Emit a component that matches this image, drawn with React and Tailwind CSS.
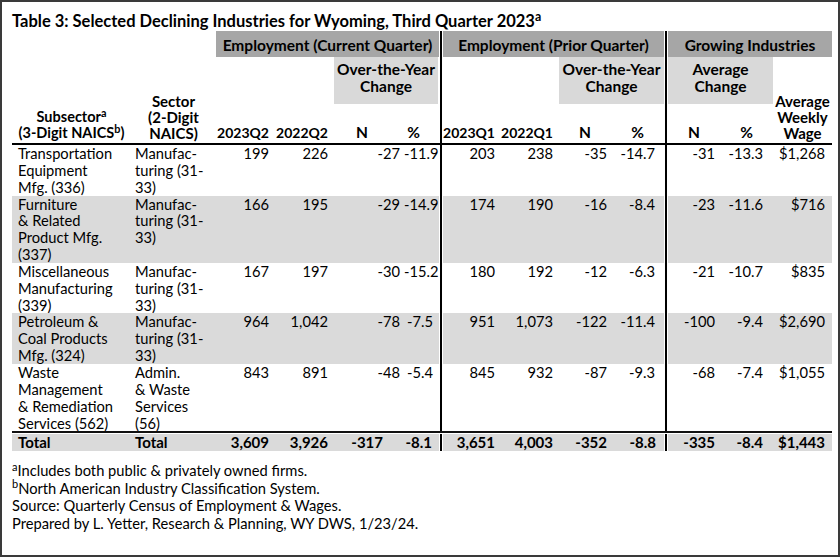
const rows = [
  {
    sub: ['Transportation', 'Equipment', 'Mfg. (336)'],
    sec: ['Manufac-', 'turing (31-', '33)'],
    v: ['199', '226', '-27', '-11.9', '203', '238', '-35', '-14.7', '-31', '-13.3', '$1,268'],
    gray: false,
  },
  {
    sub: ['Furniture', '& Related', 'Product Mfg.', '(337)'],
    sec: ['Manufac-', 'turing (31-', '33)'],
    v: ['166', '195', '-29', '-14.9', '174', '190', '-16', '-8.4', '-23', '-11.6', '$716'],
    gray: true,
  },
  {
    sub: ['Miscellaneous', 'Manufacturing', '(339)'],
    sec: ['Manufac-', 'turing (31-', '33)'],
    v: ['167', '197', '-30', '-15.2', '180', '192', '-12', '-6.3', '-21', '-10.7', '$835'],
    gray: false,
  },
  {
    sub: ['Petroleum &', 'Coal Products', 'Mfg. (324)'],
    sec: ['Manufac-', 'turing (31-', '33)'],
    v: ['964', '1,042', '-78', '-7.5', '951', '1,073', '-122', '-11.4', '-100', '-9.4', '$2,690'],
    gray: true,
  },
  {
    sub: ['Waste', 'Management', '& Remediation', 'Services (562)'],
    sec: ['Admin.', '& Waste', 'Services', '(56)'],
    v: ['843', '891', '-48', '-5.4', '845', '932', '-87', '-9.3', '-68', '-7.4', '$1,055'],
    gray: false,
  },
];

const total = ['3,609', '3,926', '-317', '-8.1', '3,651', '4,003', '-352', '-8.8', '-335', '-8.4', '$1,443'];

// right padding per number column, so the digits land where the original has them
const pad = ['pr-[6px]', 'pr-[6px]', 'pr-[4px]', 'pr-[6px]', 'pr-[6px]', 'pr-[6px]', 'pr-[4px]', 'pr-[9px]', 'pr-[5px]', 'pr-[10px]', 'pr-[7px]'];
const totalPad = ['pr-[6px]', 'pr-[6px]', 'pr-[21px]', 'pr-[7px]', 'pr-[6px]', 'pr-[6px]', 'pr-[4px]', 'pr-[8px]', 'pr-[5px]', 'pr-[10px]', 'pr-[7px]'];

const cols = 'grid grid-cols-[119px_85px_59px_59px_70px_35px_4px_58px_58px_52px_53px_4px_52px_53px_59px]';

const Rule = () => (
  <div className="flex justify-center">
    <div className="w-[2px] bg-black" />
  </div>
);

const Lines = ({ items }) => items.map((t, i) => <div key={i}>{t}</div>);

const DataRow = ({ row, padCls }) => {
  const bg = row.gray ? 'bg-[#dadada]' : 'bg-white';
  const cells = [];
  row.v.forEach((val, i) => {
    if (i === 4 || i === 8) cells.push(<Rule key={'r' + i} />);
    cells.push(
      <div key={i} className={`${bg} text-right ${padCls[i]}`}>
        {val}
      </div>
    );
  });
  return (
    <>
      <div className={`${bg} pl-[6px] whitespace-nowrap`}>
        <Lines items={row.sub} />
      </div>
      <div className={`${bg} pl-[4px] whitespace-nowrap`}>
        <Lines items={row.sec} />
      </div>
      {cells}
    </>
  );
};

const Head = ({ className, children }) => (
  <div className={`font-bold text-[14px] flex items-end pb-[2px] ${className}`}>{children}</div>
);

export default function App() {
  return (
    <div
      className="w-[840px] h-[557px] border-2 border-[#3a3a3a] bg-white text-black pl-[10px] pt-[9px]"
      style={{ fontFamily: 'Lato, "Open Sans", sans-serif' }}
    >
      <h1 className="text-[16.5px] font-bold leading-[20px] whitespace-nowrap">
        Table 3: Selected Declining Industries for Wyoming, Third Quarter 2023<sup>a</sup>
      </h1>

      {/* heading block */}
      <div className={`${cols} grid-rows-[26px_47px_39px_2px] leading-[17px]`}>
        <div className="row-start-1 col-start-3 col-span-4 bg-[#a6a6a6] font-bold text-[15.5px] flex items-center justify-center pt-[2px]">
          Employment (Current Quarter)
        </div>
        <div className="row-start-1 col-start-7 row-span-3 flex justify-center">
          <div className="w-[2px] bg-black" />
        </div>
        <div className="row-start-1 col-start-8 col-span-4 bg-[#a6a6a6] font-bold text-[15.5px] flex items-center justify-center pt-[2px]">
          Employment (Prior Quarter)
        </div>
        <div className="row-start-1 col-start-12 row-span-3 flex justify-center">
          <div className="w-[2px] bg-black" />
        </div>
        <div className="row-start-1 col-start-13 col-span-3 bg-[#a6a6a6] font-bold text-[15.5px] flex items-center justify-center pt-[2px]">
          Growing Industries
        </div>

        <div className="row-start-2 col-start-1 row-span-2 font-bold text-[14.5px] text-center leading-[16px] flex flex-col justify-end pb-[2px]">
          <div>
            Subsector<sup>a</sup>
          </div>
          <div>
            (3-Digit NAICS<sup>b</sup>)
          </div>
        </div>
        <div className="row-start-2 col-start-2 row-span-2 font-bold text-[15px] text-center leading-[16px] flex flex-col justify-end pb-[2px]">
          <div>Sector</div>
          <div>(2-Digit</div>
          <div>NAICS)</div>
        </div>
        <div className="row-start-2 col-start-5 col-span-2 bg-[#d9d9d9] font-bold text-[15.5px] text-center pt-[4px] mr-[1px]">
          <div>Over-the-Year</div>
          <div>Change</div>
        </div>
        <div className="row-start-2 col-start-10 col-span-2 bg-[#d9d9d9] font-bold text-[15.5px] text-center pt-[4px]">
          <div>Over-the-Year</div>
          <div>Change</div>
        </div>
        <div className="row-start-2 col-start-13 col-span-2 bg-[#d9d9d9] font-bold text-[15.5px] text-center pt-[4px]">
          <div>Average</div>
          <div>Change</div>
        </div>
        <div className="row-start-2 col-start-15 row-span-2 font-bold text-[15px] text-center leading-[16px] flex flex-col justify-end pb-[2px]">
          <div>Average</div>
          <div>Weekly</div>
          <div>Wage</div>
        </div>

        <Head className="row-start-3 col-start-3 justify-end pr-[6px]">2023Q2</Head>
        <Head className="row-start-3 col-start-4 justify-end pr-[6px]">2022Q2</Head>
        <Head className="row-start-3 col-start-5 justify-center pr-[14px] text-[15.5px]">N</Head>
        <Head className="row-start-3 col-start-6 justify-center pr-[16px] text-[15.5px]">%</Head>
        <Head className="row-start-3 col-start-8 justify-end pr-[6px]">2023Q1</Head>
        <Head className="row-start-3 col-start-9 justify-end pr-[6px]">2022Q1</Head>
        <Head className="row-start-3 col-start-10 justify-center text-[15.5px]">N</Head>
        <Head className="row-start-3 col-start-11 justify-center text-[15.5px]">%</Head>
        <Head className="row-start-3 col-start-13 justify-center text-[15.5px]">N</Head>
        <Head className="row-start-3 col-start-14 justify-center text-[15.5px]">%</Head>

        <div className="row-start-4 col-start-1 col-span-15 bg-black" />
      </div>

      {/* body */}
      <div className={`${cols} text-[14.7px] leading-[16.85px]`}>
        {rows.map((row, i) => (
          <DataRow key={i} row={row} padCls={pad} />
        ))}
        <div className="col-span-15 h-[3px] border-t-2 border-[#111]" />
      </div>
      <div className={`${cols} text-[15px] leading-[17px] font-bold`}>
        <DataRow row={{ sub: ['Total'], sec: ['Total'], v: total, gray: true }} padCls={totalPad} />
      </div>

      <div className="mt-[11px] text-[14.7px] leading-[17.5px]">
        <div>
          <sup>a</sup>Includes both public &amp; privately owned firms.
        </div>
        <div>
          <sup>b</sup>North American Industry Classification System.
        </div>
        <div>Source: Quarterly Census of Employment &amp; Wages.</div>
        <div>Prepared by L. Yetter, Research &amp; Planning, WY DWS, 1/23/24.</div>
      </div>
    </div>
  );
}
